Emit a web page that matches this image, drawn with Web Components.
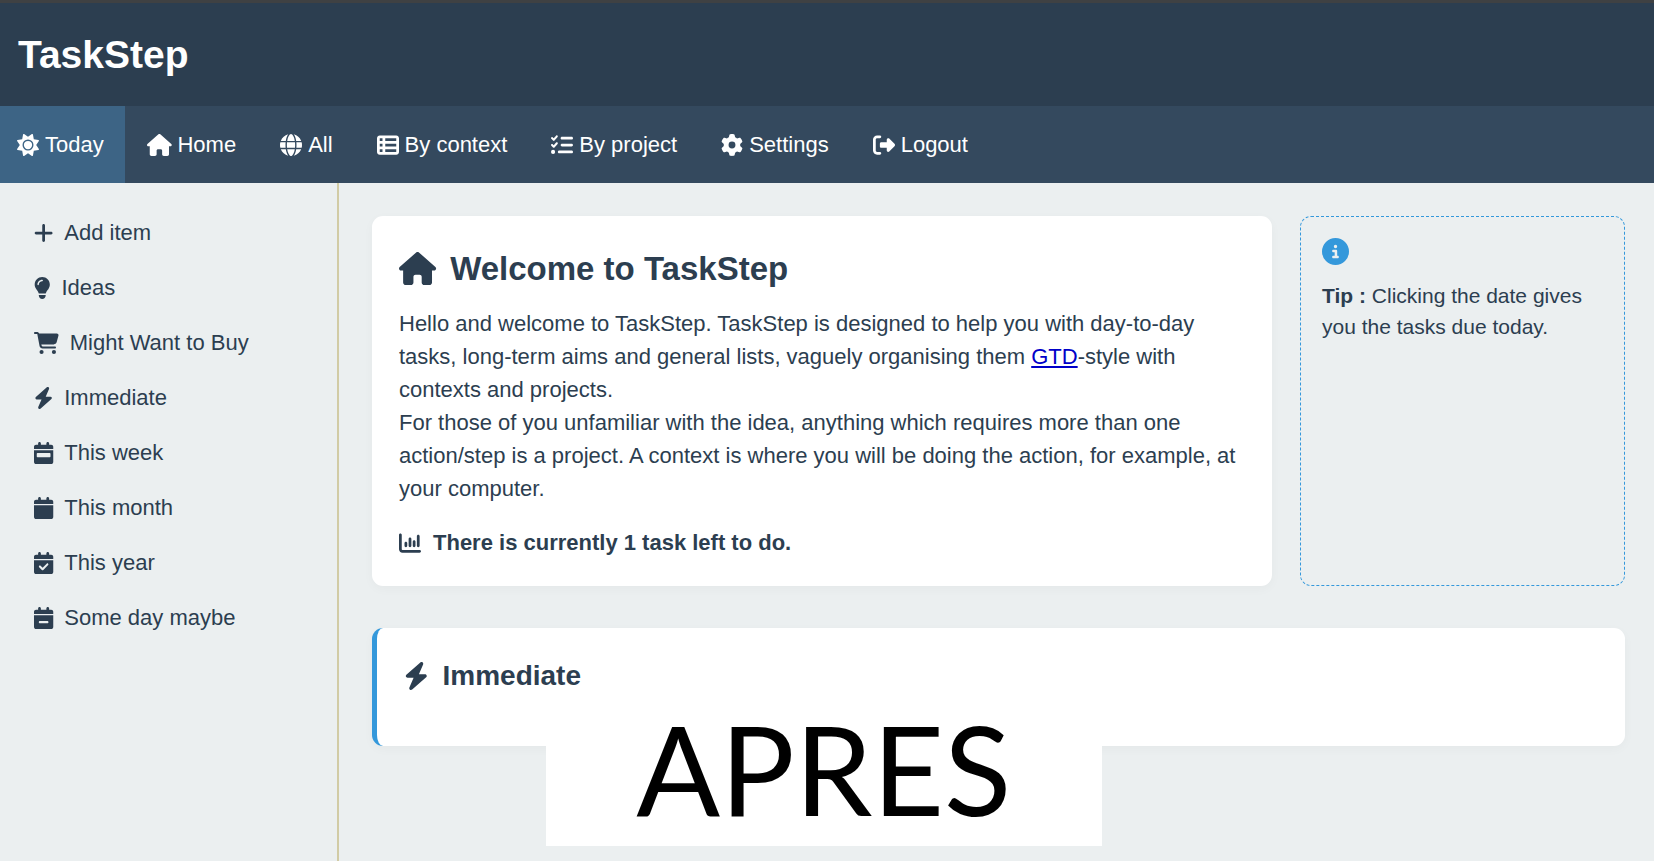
<!DOCTYPE html>
<html lang="en">
<head>
<meta charset="utf-8">
<meta name="viewport" content="width=device-width, initial-scale=1">
<title>TaskStep</title>
<style>
  * {
    box-sizing: border-box;
  }

  body {
    margin: 0;
    background: #ebeff0;
    color: #2c3e50;
    font-family: "Liberation Sans", Arial, sans-serif;
    font-size: 22px;
    line-height: 33px;
  }

  welcome-card a {
    color: #0000c8;
  }
</style>
</head>
<body>
<task-app>
  <task-header slot="header">TaskStep</task-header>

  <task-nav slot="nav">
    <nav-item icon="sun" active>Today</nav-item>
    <nav-item icon="house">Home</nav-item>
    <nav-item icon="globe">All</nav-item>
    <nav-item icon="table-list">By context</nav-item>
    <nav-item icon="list-check">By project</nav-item>
    <nav-item icon="gear">Settings</nav-item>
    <nav-item icon="logout">Logout</nav-item>
  </task-nav>

  <task-sidebar slot="sidebar">
    <side-item icon="plus">Add item</side-item>
    <side-item icon="lightbulb">Ideas</side-item>
    <side-item icon="cart">Might Want to Buy</side-item>
    <side-item icon="bolt">Immediate</side-item>
    <side-item icon="calendar-week">This week</side-item>
    <side-item icon="calendar">This month</side-item>
    <side-item icon="calendar-check">This year</side-item>
    <side-item icon="calendar-minus">Some day maybe</side-item>
  </task-sidebar>

  <welcome-card>
    <span slot="title">Welcome to TaskStep</span>
    Hello and welcome to TaskStep. TaskStep is designed to help you with day-to-day tasks, long-term aims and general lists, vaguely organising them <a href="#gtd">GTD</a>-style with contexts and projects.<br>
    For those of you unfamiliar with the idea, anything which requires more than one action/step is a project. A context is where you will be doing the action, for example, at your computer.
    <span slot="status">There is currently 1 task left to do.</span>
  </welcome-card>
  <tip-box>Clicking the date gives you the tasks due today.</tip-box>
  <task-section icon="bolt">Immediate</task-section>
  <caption-label slot="caption">APRES</caption-label>
</task-app>

<script>
const CALENDAR = "M96 32V64H48C21.5 64 0 85.5 0 112v48H448V112c0-26.5-21.5-48-48-48H352V32c0-17.7-14.3-32-32-32s-32 14.3-32 32V64H160V32c0-17.7-14.3-32-32-32S96 14.3 96 32zM448 192H0V464c0 26.5 21.5 48 48 48H400c26.5 0 48-21.5 48-48V192z";

// [viewBox width, path]
const ICONS = {
  "sun": [512, "M361.5 1.2c5 2.1 8.6 6.6 9.6 11.9L391 121l107.9 19.8c5.3 1 9.8 4.6 11.9 9.6s1.5 10.7-1.6 15.2L446.9 256l62.3 90.3c3.1 4.5 3.7 10.2 1.6 15.2s-6.6 8.6-11.9 9.6L391 391 371.1 498.9c-1 5.3-4.6 9.8-9.6 11.9s-10.7 1.5-15.2-1.6L256 446.9l-90.3 62.3c-4.5 3.1-10.2 3.7-15.2 1.6s-8.6-6.6-9.6-11.9L121 391 13.1 371.1c-5.3-1-9.8-4.6-11.9-9.6s-1.5-10.7 1.6-15.2L65.1 256 2.8 165.7c-3.1-4.5-3.7-10.2-1.6-15.2s6.6-8.6 11.9-9.6L121 121 140.9 13.1c1-5.3 4.6-9.8 9.6-11.9s10.7-1.5 15.2 1.6L256 65.1 346.3 2.8c4.5-3.1 10.2-3.7 15.2-1.6zM160 256a96 96 0 1 1 192 0 96 96 0 1 1 -192 0zm224 0a128 128 0 1 0 -256 0 128 128 0 1 0 256 0z"],
  "house": [576, "M575.8 255.5c0 18-15 32.1-32 32.1h-32l.7 160.2c0 2.7-.2 5.4-.5 8.1V472c0 22.1-17.9 40-40 40H456c-1.1 0-2.2 0-3.3-.1c-1.4 .1-2.8 .1-4.2 .1H416 392c-22.1 0-40-17.9-40-40V448 384c0-17.7-14.3-32-32-32H256c-17.7 0-32 14.3-32 32v64 24c0 22.1-17.9 40-40 40H160 128.1c-1.5 0-3-.1-4.5-.2c-1.2 .1-2.4 .2-3.6 .2H104c-22.1 0-40-17.9-40-40V360c0-.9 0-1.9 .1-2.8V287.6H32c-18 0-32-14-32-32.1c0-9 3-17 10-24L266.4 8c7-7 15-8 22-8s15 2 21 7L564.8 231.5c8 7 12 15 11 24z"],
  "globe": [512, "M352 256c0 22.2-1.2 43.6-3.3 64H163.3c-2.2-20.4-3.3-41.8-3.3-64s1.2-43.6 3.3-64H348.7c2.2 20.4 3.3 41.8 3.3 64zm28.8-64H503.9c5.3 20.5 8.1 41.9 8.1 64s-2.8 43.5-8.1 64H380.8c2.1-20.6 3.2-42 3.2-64s-1.1-43.4-3.2-64zm112.6-32H376.7c-10-63.9-29.8-117.4-55.3-151.6c78.3 20.7 142 77.5 171.9 151.6zm-149.1 0H167.7c6.1-36.4 15.5-68.6 27-94.7c10.5-23.6 22.2-40.7 33.5-51.5C239.4 3.2 248.7 0 256 0s16.6 3.2 27.8 13.8c11.3 10.8 23 27.9 33.5 51.5c11.6 26 20.9 58.2 27 94.7zm-209 0H18.6C48.6 85.9 112.2 29.1 190.6 8.4C165.1 42.6 145.3 96.1 135.3 160zM8.1 192H131.2c-2.1 20.6-3.2 42-3.2 64s1.1 43.4 3.2 64H8.1C2.8 299.5 0 278.1 0 256s2.8-43.5 8.1-64zM194.7 446.6c-11.6-26-20.9-58.2-27-94.6H344.3c-6.1 36.4-15.5 68.6-27 94.6c-10.5 23.6-22.2 40.7-33.5 51.5C272.6 508.8 263.3 512 256 512s-16.6-3.2-27.8-13.8c-11.3-10.8-23-27.9-33.5-51.5zM135.3 352c10 63.9 29.8 117.4 55.3 151.6C112.2 482.9 48.6 426.1 18.6 352H135.3zm358.1 0c-30 74.1-93.6 130.9-171.9 151.6c25.5-34.2 45.2-87.7 55.3-151.6H493.4z"],
  "table-list": [512, "M0 96C0 60.7 28.7 32 64 32H448c35.3 0 64 28.7 64 64V416c0 35.3-28.7 64-64 64H64c-35.3 0-64-28.7-64-64V96zm64 0v64h64V96H64zm384 0H192v64H448V96zM64 224v64h64V224H64zm384 0H192v64H448V224zM64 352v64h64V352H64zm384 0H192v64H448V352z"],
  "list-check": [512, "M152.1 38.2c9.9 8.9 10.7 24 1.8 33.9l-72 80c-4.4 4.9-10.6 7.8-17.2 7.9s-12.9-2.4-17.6-7L7 113C-2.3 103.6-2.3 88.4 7 79s24.6-9.4 33.9 0l22.1 22.1 55.1-61.2c8.9-9.9 24-10.7 33.9-1.8zm0 160c9.9 8.9 10.7 24 1.8 33.9l-72 80c-4.4 4.9-10.6 7.8-17.2 7.9s-12.9-2.4-17.6-7L7 273c-9.4-9.4-9.4-24.6 0-33.9s24.6-9.4 33.9 0l22.1 22.1 55.1-61.2c8.9-9.9 24-10.7 33.9-1.8zM224 96c0-17.7 14.3-32 32-32H480c17.7 0 32 14.3 32 32s-14.3 32-32 32H256c-17.7 0-32-14.3-32-32zm0 160c0-17.7 14.3-32 32-32H480c17.7 0 32 14.3 32 32s-14.3 32-32 32H256c-17.7 0-32-14.3-32-32zM160 416c0-17.7 14.3-32 32-32H480c17.7 0 32 14.3 32 32s-14.3 32-32 32H192c-17.7 0-32-14.3-32-32zM48 368a48 48 0 1 1 0 96 48 48 0 1 1 0-96z"],
  "gear": [512, "M495.9 166.6c3.2 8.7 .5 18.4-6.4 24.6l-43.3 39.4c1.1 8.3 1.7 16.8 1.7 25.4s-.6 17.1-1.7 25.4l43.3 39.4c6.9 6.2 9.6 15.9 6.4 24.6c-4.4 11.9-9.7 23.3-15.8 34.3l-4.7 8.1c-6.6 11-14 21.4-22.1 31.2c-5.9 7.2-15.7 9.6-24.5 6.8l-55.7-17.7c-13.4 10.3-28.2 18.9-44 25.4l-12.5 57.1c-2 9.1-9 16.3-18.2 17.8c-13.8 2.3-28 3.5-42.5 3.5s-28.7-1.2-42.5-3.5c-9.2-1.5-16.2-8.7-18.2-17.8l-12.5-57.1c-15.8-6.5-30.6-15.1-44-25.4L83.1 425.9c-8.8 2.8-18.6 .3-24.5-6.8c-8.1-9.8-15.5-20.2-22.1-31.2l-4.7-8.1c-6.1-11-11.4-22.4-15.8-34.3c-3.2-8.7-.5-18.4 6.4-24.6l43.3-39.4C64.6 273.1 64 264.6 64 256s.6-17.1 1.7-25.4L22.4 191.2c-6.9-6.2-9.6-15.9-6.4-24.6c4.4-11.9 9.7-23.3 15.8-34.3l4.7-8.1c6.6-11 14-21.4 22.1-31.2c5.9-7.2 15.7-9.6 24.5-6.8l55.7 17.7c13.4-10.3 28.2-18.9 44-25.4l12.5-57.1c2-9.1 9-16.3 18.2-17.8C227.3 1.2 241.5 0 256 0s28.7 1.2 42.5 3.5c9.2 1.5 16.2 8.7 18.2 17.8l12.5 57.1c15.8 6.5 30.6 15.1 44 25.4l55.7-17.7c8.8-2.8 18.6-.3 24.5 6.8c8.1 9.8 15.5 20.2 22.1 31.2l4.7 8.1c6.1 11 11.4 22.4 15.8 34.3zM256 336a80 80 0 1 0 0-160 80 80 0 1 0 0 160z"],
  "logout": [512, "M377.9 105.9L500.7 228.7c7.2 7.2 11.3 17.1 11.3 27.3s-4.1 20.1-11.3 27.3L377.9 406.1c-6.4 6.4-15 9.9-24 9.9c-18.7 0-33.9-15.2-33.9-33.9l0-62.1-128 0c-17.7 0-32-14.3-32-32l0-64c0-17.7 14.3-32 32-32l128 0 0-62.1c0-18.7 15.2-33.9 33.9-33.9c9 0 17.6 3.6 24 9.9zM160 96L96 96c-17.7 0-32 14.3-32 32l0 256c0 17.7 14.3 32 32 32l64 0c17.7 0 32 14.3 32 32s-14.3 32-32 32l-64 0c-53 0-96-43-96-96L0 128C0 75 43 32 96 32l64 0c17.7 0 32 14.3 32 32s-14.3 32-32 32z"],
  "plus": [448, "M256 80c0-17.7-14.3-32-32-32s-32 14.3-32 32V224H48c-17.7 0-32 14.3-32 32s14.3 32 32 32H192V432c0 17.7 14.3 32 32 32s32-14.3 32-32V288H400c17.7 0 32-14.3 32-32s-14.3-32-32-32H256V80z"],
  "lightbulb": [384, "M272 384c9.6-31.9 29.5-59.1 49.2-86.2l0 0c5.2-7.1 10.4-14.2 15.4-21.4c19.8-28.5 31.4-63 31.4-100.3C368 78.8 289.2 0 192 0S16 78.8 16 176c0 37.3 11.6 71.9 31.4 100.3c5 7.2 10.2 14.3 15.4 21.4l0 0c19.8 27.1 39.7 54.4 49.2 86.2H272zM192 512c44.2 0 80-35.8 80-80V416H112v16c0 44.2 35.8 80 80 80zM112 176c0 8.8-7.2 16-16 16s-16-7.2-16-16c0-61.9 50.1-112 112-112c8.8 0 16 7.2 16 16s-7.2 16-16 16c-44.2 0-80 35.8-80 80z"],
  "cart": [576, "M0 24C0 10.7 10.7 0 24 0H69.5c22 0 41.5 12.8 50.6 32h411c26.3 0 45.5 25 38.6 50.4l-41 152.3c-8.5 31.4-37 53.3-69.5 53.3H170.7l5.4 28.5c2.2 11.3 12.1 19.5 23.6 19.5H488c13.3 0 24 10.7 24 24s-10.7 24-24 24H199.7c-34.6 0-64.3-24.6-70.7-58.5L77.4 54.5c-.7-3.8-4-6.5-7.9-6.5H24C10.7 48 0 37.3 0 24zM128 464a48 48 0 1 1 96 0 48 48 0 1 1 -96 0zm336-48a48 48 0 1 1 0 96 48 48 0 1 1 0-96z"],
  "bolt": [448, "M349.4 44.6c5.9-13.7 1.5-29.7-10.6-38.5s-28.6-8-39.9 1.8l-256 224c-10 8.8-13.6 22.9-8.9 35.3S50.7 288 64 288H175.5L98.6 467.4c-5.9 13.7-1.5 29.7 10.6 38.5s28.6 8 39.9-1.8l256-224c10-8.8 13.6-22.9 8.9-35.3s-16.6-20.7-30-20.7H272.5L349.4 44.6z"],
  "calendar": [448, CALENDAR],
  "calendar-week": [448, CALENDAR + "M80 256c-8.8 0-16 7.2-16 16v64c0 8.8 7.2 16 16 16H368c8.8 0 16-7.2 16-16V272c0-8.8-7.2-16-16-16H80z"],
  "calendar-check": [448, CALENDAR + "M329 305c9.4-9.4 9.4-24.6 0-33.9s-24.6-9.4-33.9 0l-95 95-47-47c-9.4-9.4-24.6-9.4-33.9 0s-9.4 24.6 0 33.9l64 64c9.4 9.4 24.6 9.4 33.9 0L329 305z"],
  "calendar-minus": [448, CALENDAR + "M312 376c13.3 0 24-10.7 24-24s-10.7-24-24-24H136c-13.3 0-24 10.7-24 24s10.7 24 24 24H312z"],
  "chart": [512, "M32 32c17.7 0 32 14.3 32 32V400c0 8.8 7.2 16 16 16H480c17.7 0 32 14.3 32 32s-14.3 32-32 32H80c-44.2 0-80-35.8-80-80V64C0 46.3 14.3 32 32 32zM160 224c17.7 0 32 14.3 32 32v64c0 17.7-14.3 32-32 32s-32-14.3-32-32V256c0-17.7 14.3-32 32-32zm128-64V320c0 17.7-14.3 32-32 32s-32-14.3-32-32V160c0-17.7 14.3-32 32-32s32 14.3 32 32zm64 32c17.7 0 32 14.3 32 32v96c0 17.7-14.3 32-32 32s-32-14.3-32-32V224c0-17.7 14.3-32 32-32zM480 96V320c0 17.7-14.3 32-32 32s-32-14.3-32-32V96c0-17.7 14.3-32 32-32s32 14.3 32 32z"],
  "info": [512, "M256 512A256 256 0 1 0 256 0a256 256 0 1 0 0 512zM216 336h24V272H216c-13.3 0-24-10.7-24-24s10.7-24 24-24h48c13.3 0 24 10.7 24 24v88h8c13.3 0 24 10.7 24 24s-10.7 24-24 24H216c-13.3 0-24-10.7-24-24s10.7-24 24-24zm40-208a32 32 0 1 1 0 64 32 32 0 1 1 0-64z"]
};

// small helper, every component here is just a template in an open root
function define(name, html) {
  customElements.define(name, class extends HTMLElement {
    connectedCallback() {
      if (this.shadowRoot) return;
      const template = document.createElement("template");
      template.innerHTML = typeof html === "function" ? html(this) : html;
      this.attachShadow({ mode: "open" }).appendChild(template.content.cloneNode(true));
    }
  });
}

define("fa-icon", (el) => {
  const [width, path] = ICONS[el.getAttribute("name")];
  return /* HTML */ `
    <style>
      :host {
        display: block;
        flex: none;
      }

      svg {
        display: block;
        height: 1em;
        fill: currentColor;
        fill-rule: evenodd;
        overflow: visible;
      }
    </style>
    <svg viewBox="0 0 ${width} 512" aria-hidden="true"><path d="${path}"/></svg>
  `;
});

define("task-app", /* HTML */ `
  <style>
    :host {
      display: flex;
      flex-direction: column;
      min-height: 100vh;
      position: relative;
    }

    .columns {
      display: flex;
      flex: 1;
    }

    main {
      flex: 1;
      min-width: 0;
      padding: 33px 29px 33px 33px;
      display: grid;
      grid-template-columns: minmax(0, 36fr) minmax(0, 13fr);
      align-content: start;
      column-gap: 28px;
      row-gap: 42px;
    }
  </style>
  <slot name="header"></slot>
  <slot name="nav"></slot>
  <div class="columns">
    <slot name="sidebar"></slot>
    <main><slot></slot></main>
  </div>
  <slot name="caption"></slot>
`);

define("task-header", /* HTML */ `
  <style>
    :host {
      display: block;
      border-top: 3px solid #3f4143;
      background: #2c3e50;
      color: #fff;
      padding: 22px 18px;
    }

    h1 {
      margin: 0;
      font-size: 39px;
      line-height: 59px;
    }
  </style>
  <header><h1><slot></slot></h1></header>
`);

define("task-nav", /* HTML */ `
  <style>
    :host {
      display: block;
      background: #34495e;
    }

    nav {
      display: flex;
    }
  </style>
  <nav><slot></slot></nav>
`);

define("nav-item", (el) => /* HTML */ `
  <style>
    :host {
      display: block;
    }

    :host([active]) {
      background: #3d6485;
    }

    a {
      display: flex;
      align-items: center;
      gap: 6px;
      padding: 22px;
      color: #fff;
      text-decoration: none;
    }

    :host([active]) a {
      padding: 22px 21px 22px 17px;
    }
  </style>
  <a href="#"><fa-icon name="${el.getAttribute("icon")}"></fa-icon><slot></slot></a>
`);

define("task-sidebar", /* HTML */ `
  <style>
    :host {
      display: block;
      flex: none;
      width: 339px;
      box-sizing: border-box;
      border-right: 2px solid #d1cba5;
      padding: 22px 34px;
    }
  </style>
  <nav><slot></slot></nav>
`);

define("side-item", (el) => /* HTML */ `
  <style>
    :host {
      display: block;
    }

    a {
      display: flex;
      align-items: center;
      gap: 11px;
      padding: 11px 0;
      color: inherit;
      text-decoration: none;
    }
  </style>
  <a href="#"><fa-icon name="${el.getAttribute("icon")}"></fa-icon><slot></slot></a>
`);

define("welcome-card", /* HTML */ `
  <style>
    :host {
      display: block;
      background: #fff;
      border-radius: 11px;
      padding: 27px;
      box-shadow: 0 3px 11px rgba(0, 0, 0, 0.03);
    }

    h2 {
      display: flex;
      align-items: center;
      gap: 14px;
      margin: 0 0 13px;
      font-size: 33px;
      line-height: 51px;
    }

    p {
      margin: 0 0 21px;
    }

    .status {
      display: flex;
      align-items: center;
      gap: 12px;
      margin: 0;
      font-weight: bold;
    }
  </style>
  <h2><fa-icon name="house"></fa-icon><slot name="title"></slot></h2>
  <p><slot></slot></p>
  <div class="status"><fa-icon name="chart"></fa-icon><slot name="status"></slot></div>
`);

define("tip-box", /* HTML */ `
  <style>
    :host {
      display: block;
      border: 1px dashed #3498db;
      border-radius: 11px;
      padding: 21px;
      font-size: 21px;
      line-height: 31px;
    }

    fa-icon {
      color: #3498db;
      font-size: 27px;
      margin-bottom: 15px;
    }

    p {
      margin: 0;
    }
  </style>
  <fa-icon name="info"></fa-icon>
  <p><b>Tip :</b> <slot></slot></p>
`);

define("task-section", (el) => /* HTML */ `
  <style>
    :host {
      display: block;
      grid-column: 1 / -1;
      background: #fff;
      border-left: 5px solid #3498db;
      border-radius: 11px;
      padding: 27px;
      box-shadow: 0 3px 11px rgba(0, 0, 0, 0.03);
    }

    h3 {
      display: flex;
      align-items: center;
      gap: 14px;
      margin: 0 0 22px;
      font-size: 28px;
      line-height: 42px;
    }
  </style>
  <h3><fa-icon name="${el.getAttribute("icon")}"></fa-icon><slot></slot></h3>
`);

// white caption laid over the bottom of the page
define("caption-label", /* HTML */ `
  <style>
    :host {
      position: absolute;
      left: 33%;
      bottom: 15px;
      width: 556px;
      padding-bottom: 6px;
      background: #fff;
      color: #000;
      font-family: Lato, Carlito, sans-serif;
      font-size: 124px;
      line-height: 143px;
      text-align: center;
    }
  </style>
  <slot></slot>
`);
</script>
</body>
</html>
